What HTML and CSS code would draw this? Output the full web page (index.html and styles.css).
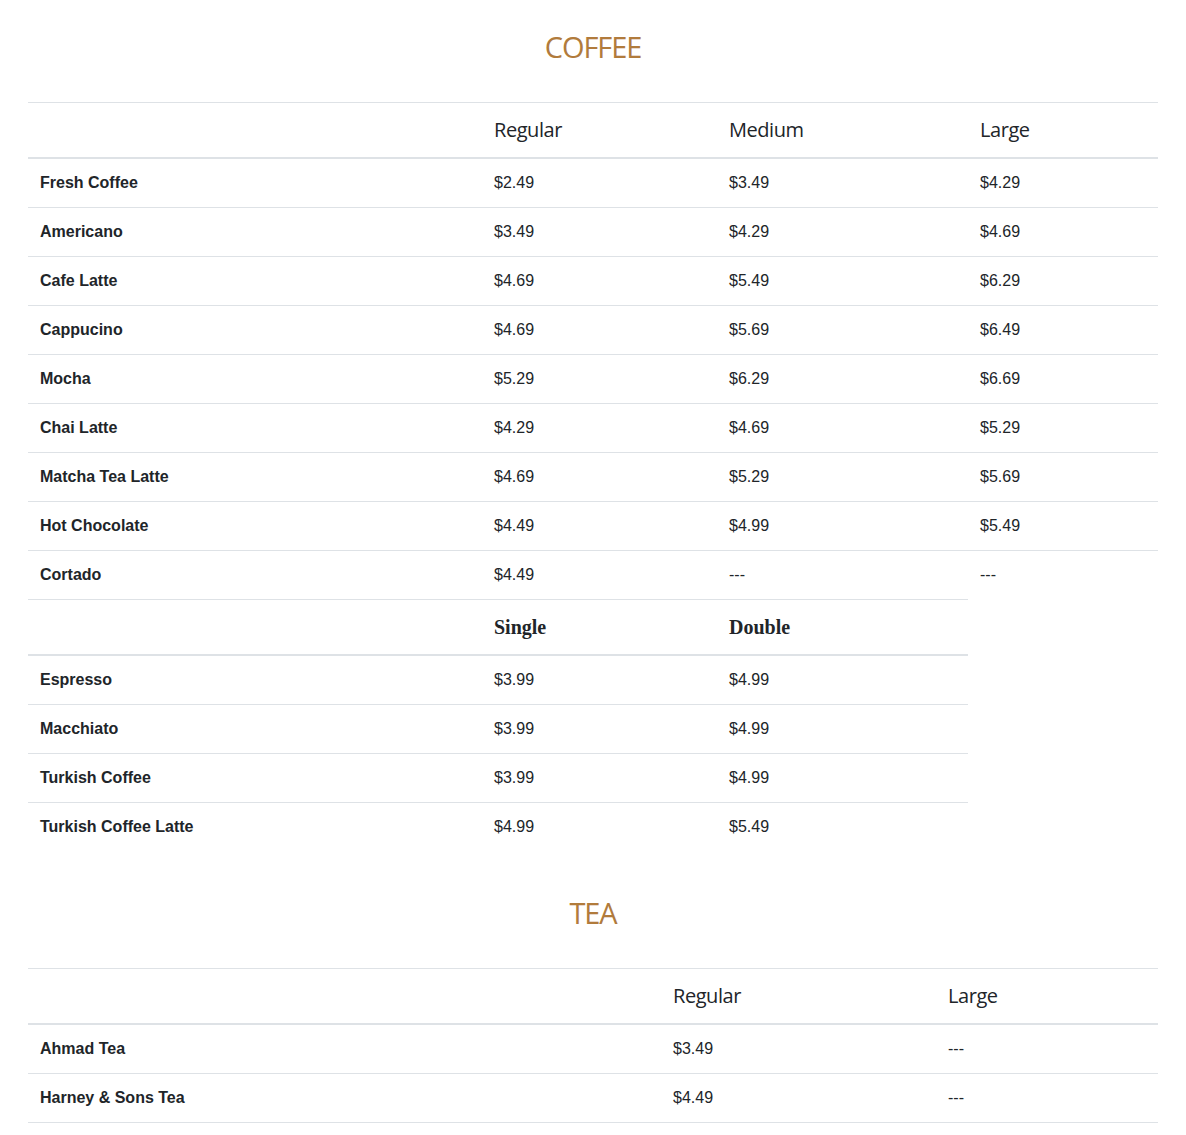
FILE: index.html
```html
<!DOCTYPE html>
<html lang="en">
<head>
<meta charset="utf-8">
<title>Menu</title>
<link rel="stylesheet" href="styles.css">
</head>
<body>
<div class="container">
  <section class="menu-section">
    <h2 class="section-title">COFFEE</h2>
    <table class="menu-table">
      <colgroup>
        <col class="c-name-coffee">
        <col class="c-reg-coffee">
        <col class="c-med-coffee">
        <col class="c-lg-coffee">
      </colgroup>
      <thead>
        <tr class="head-row">
          <th></th><th>Regular</th><th>Medium</th><th>Large</th>
        </tr>
      </thead>
      <tbody>
        <tr><td class="name">Fresh Coffee</td><td>$2.49</td><td>$3.49</td><td>$4.29</td></tr>
        <tr><td class="name">Americano</td><td>$3.49</td><td>$4.29</td><td>$4.69</td></tr>
        <tr><td class="name">Cafe Latte</td><td>$4.69</td><td>$5.49</td><td>$6.29</td></tr>
        <tr><td class="name">Cappucino</td><td>$4.69</td><td>$5.69</td><td>$6.49</td></tr>
        <tr><td class="name">Mocha</td><td>$5.29</td><td>$6.29</td><td>$6.69</td></tr>
        <tr><td class="name">Chai Latte</td><td>$4.29</td><td>$4.69</td><td>$5.29</td></tr>
        <tr><td class="name">Matcha Tea Latte</td><td>$4.69</td><td>$5.29</td><td>$5.69</td></tr>
        <tr><td class="name">Hot Chocolate</td><td>$4.49</td><td>$4.99</td><td>$5.49</td></tr>
        <tr><td class="name">Cortado</td><td>$4.49</td><td>---</td><td>---</td></tr>
        <tr class="sub-head-row">
          <th></th><th>Single</th><th>Double</th>
        </tr>
        <tr><td class="name">Espresso</td><td>$3.99</td><td>$4.99</td></tr>
        <tr><td class="name">Macchiato</td><td>$3.99</td><td>$4.99</td></tr>
        <tr><td class="name">Turkish Coffee</td><td>$3.99</td><td>$4.99</td></tr>
        <tr><td class="name">Turkish Coffee Latte</td><td>$4.99</td><td>$5.49</td></tr>
      </tbody>
    </table>
  </section>

  <section class="menu-section">
    <h2 class="section-title">TEA</h2>
    <table class="menu-table tea-table">
      <colgroup>
        <col class="c-name-tea">
        <col class="c-reg-tea">
        <col class="c-lg-tea">
      </colgroup>
      <thead>
        <tr class="head-row">
          <th></th><th>Regular</th><th>Large</th>
        </tr>
      </thead>
      <tbody>
        <tr><td class="name">Ahmad Tea</td><td>$3.49</td><td>---</td></tr>
        <tr><td class="name">Harney &amp; Sons Tea</td><td>$4.49</td><td>---</td></tr>
      </tbody>
    </table>
  </section>
</div>
</body>
</html>
```

FILE: styles.css
```css
html, body {
  margin: 0;
  padding: 0;
  background: #ffffff;
}

body {
  font-family: "Liberation Sans", Arial, sans-serif;
  font-size: 16px;
  line-height: 1.5;
  color: #212529;
}

.container {
  padding: 0 28px;
}

.section-title {
  margin: 29px 0 37px;
  text-align: center;
  font-family: "Open Sans", sans-serif;
  font-weight: 400;
  font-size: 29px;
  line-height: 36px;
  color: #b17b3c;
  letter-spacing: -1.1px;
}

.menu-table {
  width: 100%;
  table-layout: fixed;
  border-collapse: collapse;
  margin-bottom: 44px;
}

.c-name-coffee { width: 454px; }
.c-reg-coffee { width: 235px; }
.c-med-coffee { width: 251px; }
.c-lg-coffee { width: 190px; }

.c-name-tea { width: 633px; }
.c-reg-tea { width: 275px; }
.c-lg-tea { width: 222px; }

.menu-table th,
.menu-table td {
  padding: 12px;
  text-align: left;
  vertical-align: top;
  border-top: 1px solid #dee2e6;
}

.tea-table tbody tr:last-child td {
  border-bottom: 1px solid #dee2e6;
}

.head-row th {
  font-family: "Open Sans", sans-serif;
  font-weight: 400;
  font-size: 20px;
  line-height: 30px;
  letter-spacing: -0.45px;
  vertical-align: bottom;
  border-bottom: 2px solid #dee2e6;
}

.sub-head-row th {
  font-family: "Liberation Serif", "Times New Roman", serif;
  font-weight: 700;
  font-size: 20px;
  line-height: 30px;
  vertical-align: bottom;
  border-bottom: 2px solid #dee2e6;
}

.menu-table td.name {
  font-weight: 700;
}
```
